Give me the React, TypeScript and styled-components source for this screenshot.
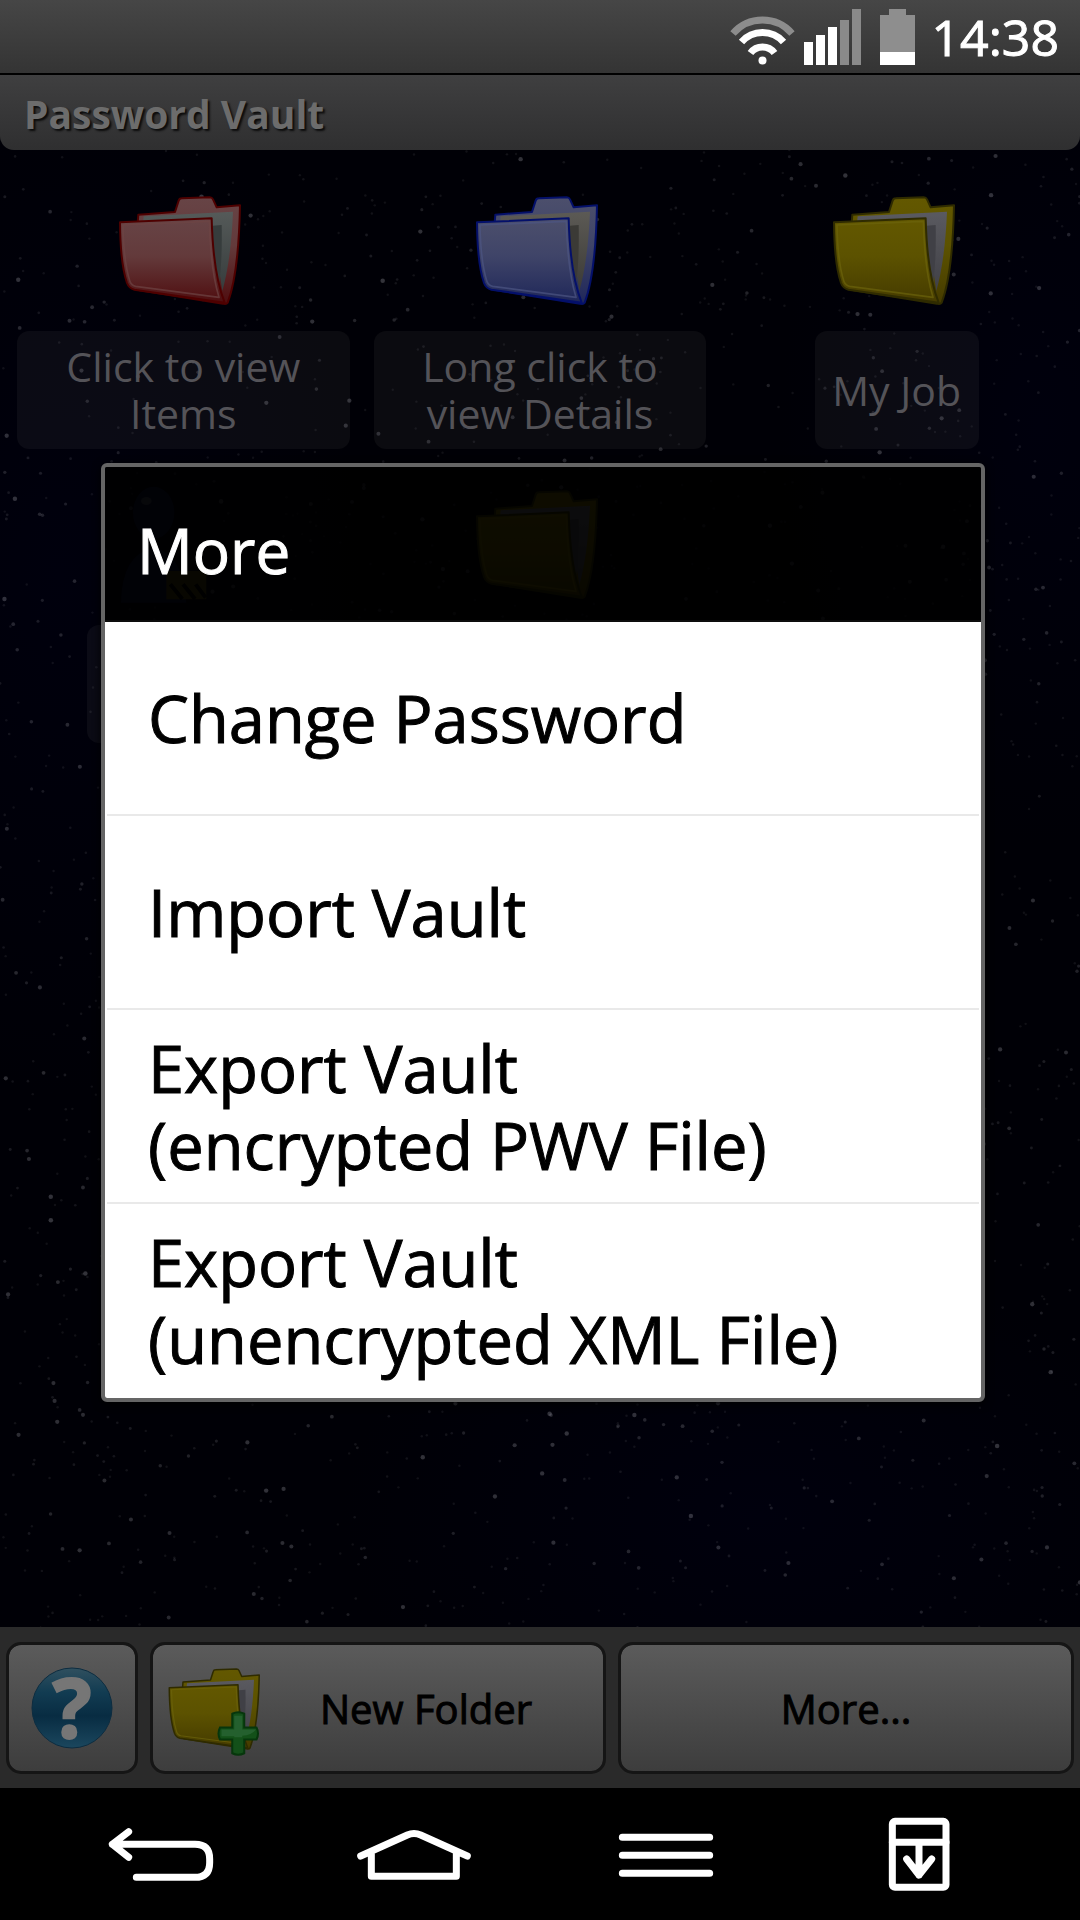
import React from "react";
import styled, { createGlobalStyle } from "styled-components";

const GlobalStyle = createGlobalStyle`
  *, *::before, *::after { box-sizing: border-box; }
  body {
    margin: 0;
    background: #000;
    font-family: "Open Sans", "Noto Sans", sans-serif;
  }
  button { font: inherit; cursor: pointer; }
`;

const Screen = styled.div`
  display: flex;
  flex-direction: column;
  min-height: 100vh;
`;

const StatusBar = styled.header`
  display: flex;
  justify-content: flex-end;
  align-items: center;
  height: 75px;
  padding-right: 21px;
  border-bottom: 2px solid #000;
  background: linear-gradient(#464646, #343434);
`;

const StatusIcon = styled.svg<{ $gap: number }>`
  flex: none;
  height: 73px;
  margin-right: ${(p) => p.$gap}px;
`;

const Clock = styled.time`
  color: #fff;
  font-size: 50px;
  line-height: 74px;
  -webkit-text-stroke: 1px currentColor;
`;

const Stage = styled.div`
  position: relative;
  isolation: isolate;
  flex: 1;
  display: flex;
  flex-direction: column;
  background: #000006;
`;

const Sky = styled.svg`
  position: absolute;
  inset: 0;
  z-index: -1;
  width: 100%;
  height: 100%;
`;

const TitleBar = styled.h1`
  margin: 0;
  padding: 0 24px;
  height: 75px;
  border-radius: 0 0 14px 14px;
  background: linear-gradient(#3f3f40, #2f2f30);
  color: #6c6c6c;
  font-size: 39px;
  font-weight: 700;
  line-height: 78px;
  text-shadow: 2px 2px 2px #0c0c0c;
`;

const FolderGrid = styled.main`
  flex: 1;
  display: grid;
  grid-template-columns: repeat(3, 1fr);
  align-content: start;
  row-gap: 41px;
  padding: 46px 5px;
`;

const FolderTile = styled.button`
  display: flex;
  flex-direction: column;
  align-items: center;
  gap: 25px;
  padding: 0 12px;
  border: 0;
  background: none;
`;

const TileArt = styled.svg`
  width: 144px;
  height: 110px;
  overflow: visible;
`;

const TileLabel = styled.span<{ $wide?: boolean }>`
  display: flex;
  align-items: center;
  justify-content: center;
  width: ${(p) => (p.$wide ? "100%" : "auto")};
  min-width: 164px;
  height: 118px;
  padding: 0 12px;
  border-radius: 12px;
  background: rgba(140, 140, 140, 0.08);
  color: #545358;
  font-size: 41px;
  line-height: 47px;
`;

const LabelText = styled.span`
  max-width: 260px;
`;

const BottomBar = styled.footer`
  display: grid;
  grid-template-columns: 132px 1fr 1fr;
  gap: 12px;
  padding: 15px 6px 14px;
  background: #2a2a2a;
`;

const BarButton = styled.button`
  display: flex;
  align-items: center;
  justify-content: center;
  height: 132px;
  padding: 0 13px;
  border: 3px solid #151515;
  border-radius: 15px;
  background: linear-gradient(#5b5b5b, #3d3d3d) padding-box;
  color: #000;
  font-size: 40px;
`;

const BarIcon = styled.svg`
  flex: none;
  width: 96px;
  height: 96px;
  overflow: visible;
`;

const BarText = styled.span`
  flex: 1;
  text-align: center;
  -webkit-text-stroke: 1px currentColor;
`;

const Scrim = styled.div`
  position: absolute;
  inset: 0;
  display: flex;
  align-items: center;
  padding: 1px 95px 0 101px;
`;

const Dialog = styled.section`
  flex: 1;
  border: 4px solid #656565;
  border-radius: 6px;
  box-shadow: 0 2px 8px #000;
  overflow: hidden;
`;

const DialogTitle = styled.h2`
  margin: 0;
  height: 155px;
  padding: 45px 32px 0;
  background: rgba(0, 0, 0, 0.86);
  border-bottom: 2px solid #0d0d0d;
  color: #fff;
  font-size: 62px;
  font-weight: 400;
  line-height: 77px;
  -webkit-text-stroke: 1px currentColor;
`;

const MenuList = styled.ul`
  margin: 0;
  padding: 0 0 2px;
  list-style: none;
  background: #fff;
`;

const MenuRow = styled.li`
  margin: 0 2px;
  & + & { border-top: 2px solid #e9e9e9; }
`;

const MenuButton = styled.button`
  display: block;
  width: 100%;
  height: 192px;
  padding: 2px 41px 0;
  border: 0;
  background: none;
  color: #000;
  font-size: 65px;
  line-height: 77px;
  text-align: left;
  white-space: pre-line;
  -webkit-text-stroke: 1px currentColor;
`;

const NavBar = styled.nav`
  display: grid;
  grid-template-columns: repeat(4, 1fr);
  height: 132px;
  padding: 2px 35px 0;
  background: #000;
`;

const NavButton = styled.button`
  display: flex;
  justify-content: center;
  padding: 0;
  border: 0;
  background: none;
`;

const NavIcon = styled.svg`
  width: 120px;
  height: 130px;
  fill: none;
  stroke: #fff;
  stroke-width: 21;
  stroke-linecap: round;
  stroke-linejoin: round;
`;

/* Star field from a seeded generator, so that it is the same on every render. */
const STARS = (() => {
  let seed = 20140;
  const next = () => {
    seed = (seed * 1103515245 + 12345) % 2147483648;
    return seed / 2147483648;
  };
  return Array.from({ length: 2600 }, () => {
    const bright = next() ** 4;
    return {
      x: next() * 1080,
      y: next() * 1713,
      r: 1.2 + bright * 1.1,
      o: 0.09 + bright * 0.2,
    };
  });
})();

function StarSky() {
  return (
    <Sky viewBox="0 0 1080 1713" preserveAspectRatio="xMidYMid slice" aria-hidden>
      <defs>
        <radialGradient id="haze">
          <stop offset="0" stopColor="#00000d" />
          <stop offset="1" stopColor="#00000d" stopOpacity="0" />
        </radialGradient>
      </defs>
      <ellipse cx="60" cy="500" rx="300" ry="520" fill="url(#haze)" />
      <ellipse cx="1040" cy="350" rx="260" ry="420" fill="url(#haze)" />
      <ellipse cx="760" cy="1440" rx="420" ry="260" fill="url(#haze)" />
      {STARS.map((s, i) => (
        <circle key={i} cx={s.x} cy={s.y} r={s.r} fill="#b4b4c0" opacity={s.o} />
      ))}
    </Sky>
  );
}

type Tone = { edge: string; top: string; mid: string; low: string; rim: string; paper: string; shade: string };

const TONES: Record<string, Tone> = {
  red: { edge: "#4e0000", top: "#674446", mid: "#633a3b", low: "#4f0d0f", rim: "#6e4545", paper: "#555a59", shade: "#363c3c" },
  blue: { edge: "#04106a", top: "#4c4f6c", mid: "#3f4468", low: "#1f2759", rim: "#4d5583", paper: "#5c5a55", shade: "#3b3a36" },
  yellow: { edge: "#2f2b00", top: "#635800", mid: "#5c5200", low: "#453b00", rim: "#6c640c", paper: "#5a5a60", shade: "#404046" },
};

function FolderShape({ tone, id }: { tone: string; id: string }) {
  const t = TONES[tone];
  return (
    <g strokeLinejoin="round">
      <defs>
        <linearGradient id={id} x1="0" y1="0" x2="0" y2="1">
          <stop offset="0" stopColor={t.top} />
          <stop offset="0.45" stopColor={t.mid} />
          <stop offset="1" stopColor={t.low} />
        </linearGradient>
        <linearGradient id={id + "p"} x1="0" y1="0" x2="0" y2="1">
          <stop offset="0" stopColor={t.paper} />
          <stop offset="1" stopColor={t.shade} />
        </linearGradient>
      </defs>
      <path
        d="M413 500 L416 463 L526 455 L537 421 Q539 414 546 414 L630 411 Q637 411 640 417 L651 441 L721 435 Q717 640 684 727 Q680 733 670 730 L420 690Z"
        fill={`url(#${id})`}
        stroke={t.edge}
        strokeWidth="6"
      />
      <path d="M430 488 L432 468 L700 454 Q694 600 668 692 L636 480Z" fill={`url(#${id}p)`} />
      <path d="M640 496 L666 494 Q668 600 658 672 L640 560Z" fill={t.shade} />
      <path
        d="M361 486 L636 474 Q640 640 675 727 L404 688 Q388 684 382 668 Q362 610 361 486Z"
        fill={`url(#${id})`}
        stroke={t.edge}
        strokeWidth="6"
      />
      <path
        d="M370 494 L629 483 Q633 630 658 711 L408 678 Q396 676 391 664 Q372 606 370 494Z"
        fill="none"
        stroke={t.rim}
        strokeOpacity="0.7"
        strokeWidth="5"
      />
    </g>
  );
}

function AgentShape() {
  return (
    <g>
      <ellipse cx="462" cy="475" rx="62" ry="78" fill="#0b1030" />
      <ellipse cx="440" cy="440" rx="16" ry="12" fill="#33384c" />
      <path d="M364 745 Q366 600 462 580 Q550 596 560 745Z" fill="#0b1030" />
      <path d="M500 650 H620 V735 H500Z" fill="#3d3708" />
      <path d="M512 690 l36 44 M550 690 l36 44 M588 690 l30 40" stroke="#000" strokeWidth="12" />
    </g>
  );
}

const TILES = [
  { tone: "red", label: "Click to view Items", wide: true },
  { tone: "blue", label: "Long click to view Details", wide: true },
  { tone: "yellow", label: "My Job", wide: false },
];

const MENU = [
  "Change Password",
  "Import Vault",
  "Export Vault\n(encrypted PWV File)",
  "Export Vault\n(unencrypted XML File)",
];

const EmptyLabel = styled(TileLabel)`
  min-width: 192px;
`;

export default function App() {
  return (
    <Screen>
      <GlobalStyle />
      <StatusBar>
        <StatusIcon $gap={9} width="65" viewBox="730 0 65 73" fill="none" stroke="#fff" strokeWidth="7" aria-label="Wi-Fi">
          <path d="M733 33.5 A39 39 0 0 1 792 33.5" stroke="#8c8c8c" />
          <path d="M741.5 42 A28 28 0 0 1 783.5 42" />
          <path d="M750.5 53 A15 15 0 0 1 774.5 53" />
          <circle cx="762.5" cy="60.5" r="4" fill="#fff" stroke="none" />
        </StatusIcon>
        <StatusIcon $gap={19} width="57" viewBox="804 0 57 73" fill="#fff" aria-label="Signal">
          <path d="M804 42h9v23h-9zM816 35h9v30h-9zM828 27h9v38h-9z" />
          <path d="M840 20h9v45h-9zM852 9h9v56h-9z" fill="#8a8a8a" />
        </StatusIcon>
        <StatusIcon $gap={17} width="35" viewBox="880 0 35 73" aria-label="Battery">
          <path d="M889 9h17v6h9v37h-35v-37h9z" fill="#8e8e8e" />
          <path d="M880 52h35v13h-35z" fill="#fff" />
        </StatusIcon>
        <Clock>14:38</Clock>
      </StatusBar>

      <Stage>
        <StarSky />
        <TitleBar>Password Vault</TitleBar>
        <FolderGrid>
          {TILES.map((t) => (
            <FolderTile key={t.label}>
              <TileArt viewBox="334 407 432 330" aria-hidden>
                <FolderShape tone={t.tone} id={"f-" + t.tone} />
              </TileArt>
              <TileLabel $wide={t.wide}>
                <LabelText>{t.label}</LabelText>
              </TileLabel>
            </FolderTile>
          ))}
          <FolderTile aria-label="Agent">
            <TileArt viewBox="334 407 432 330" aria-hidden>
              <AgentShape />
            </TileArt>
            <EmptyLabel />
          </FolderTile>
          <FolderTile aria-label="Folder">
            <TileArt viewBox="334 407 432 330" aria-hidden>
              <FolderShape tone="yellow" id="f-second" />
            </TileArt>
          </FolderTile>
        </FolderGrid>

        <BottomBar>
          <BarButton aria-label="Help">
            <BarIcon viewBox="0 0 96 96" aria-hidden>
              <defs>
                <linearGradient id="help" x1="0" y1="0" x2="0" y2="1">
                  <stop offset="0" stopColor="#30505f" />
                  <stop offset="0.3" stopColor="#123c52" />
                  <stop offset="0.6" stopColor="#082c42" />
                  <stop offset="1" stopColor="#1b475e" />
                </linearGradient>
              </defs>
              <circle cx="48" cy="48" r="40" fill="url(#help)" stroke="#0c2c40" strokeWidth="1" />
              <text x="48" y="78" textAnchor="middle" fontFamily="Open Sans" fontWeight="700" fontSize="82" fill="#767676" stroke="#767676" strokeWidth="2">?</text>
            </BarIcon>
          </BarButton>
          <BarButton>
            <BarIcon viewBox="348 375 384 384" aria-hidden>
              <FolderShape tone="yellow" id="f-new" />
              <path
                d="M613 590 Q637 578 661 590 V645 H710 Q722 669 710 693 H661 V748 Q637 760 613 748 V693 H564 Q552 669 564 645 H613Z"
                fill="#135019"
                stroke="#06360c"
                strokeWidth="8"
              />
              <path d="M621 598 H653 V653 H708 Q690 676 653 678 V684 H621 V680 H570 V653 H621Z" fill="#24602e" />
            </BarIcon>
            <BarText>New Folder</BarText>
          </BarButton>
          <BarButton>
            <BarText>More...</BarText>
          </BarButton>
        </BottomBar>

        <Scrim>
          <Dialog role="dialog" aria-labelledby="more-title">
            <DialogTitle id="more-title">More</DialogTitle>
            <MenuList>
              {MENU.map((item) => (
                <MenuRow key={item}>
                  <MenuButton>{item}</MenuButton>
                </MenuRow>
              ))}
            </MenuList>
          </Dialog>
        </Scrim>
      </Stage>

      <NavBar>
        <NavButton aria-label="Back">
          <NavIcon viewBox="123 0 360 390">
            <path d="M206 125 L157 163 L206 202 M157 163 H405 Q449 163 449 207 V218 Q449 262 405 262 H229" />
          </NavIcon>
        </NavButton>
        <NavButton aria-label="Home">
          <NavIcon viewBox="879 0 360 390">
            <path d="M899 198 L1039 135 Q1059 126 1079 135 L1219 198 M931 190 V259 H1186 V190" />
          </NavIcon>
        </NavButton>
        <NavButton aria-label="Menu">
          <NavIcon viewBox="138 0 360 390">
            <path d="M187 142 H449 M187 196 H449 M187 250 H449" />
          </NavIcon>
        </NavButton>
        <NavButton aria-label="Notifications">
          <NavIcon viewBox="895 0 360 390">
            <rect x="995" y="94" width="161" height="198" rx="8" />
            <path d="M995 157 H1156 M1075 157 V255 M1038 207 L1075 255 L1113 207" />
          </NavIcon>
        </NavButton>
      </NavBar>
    </Screen>
  );
}
